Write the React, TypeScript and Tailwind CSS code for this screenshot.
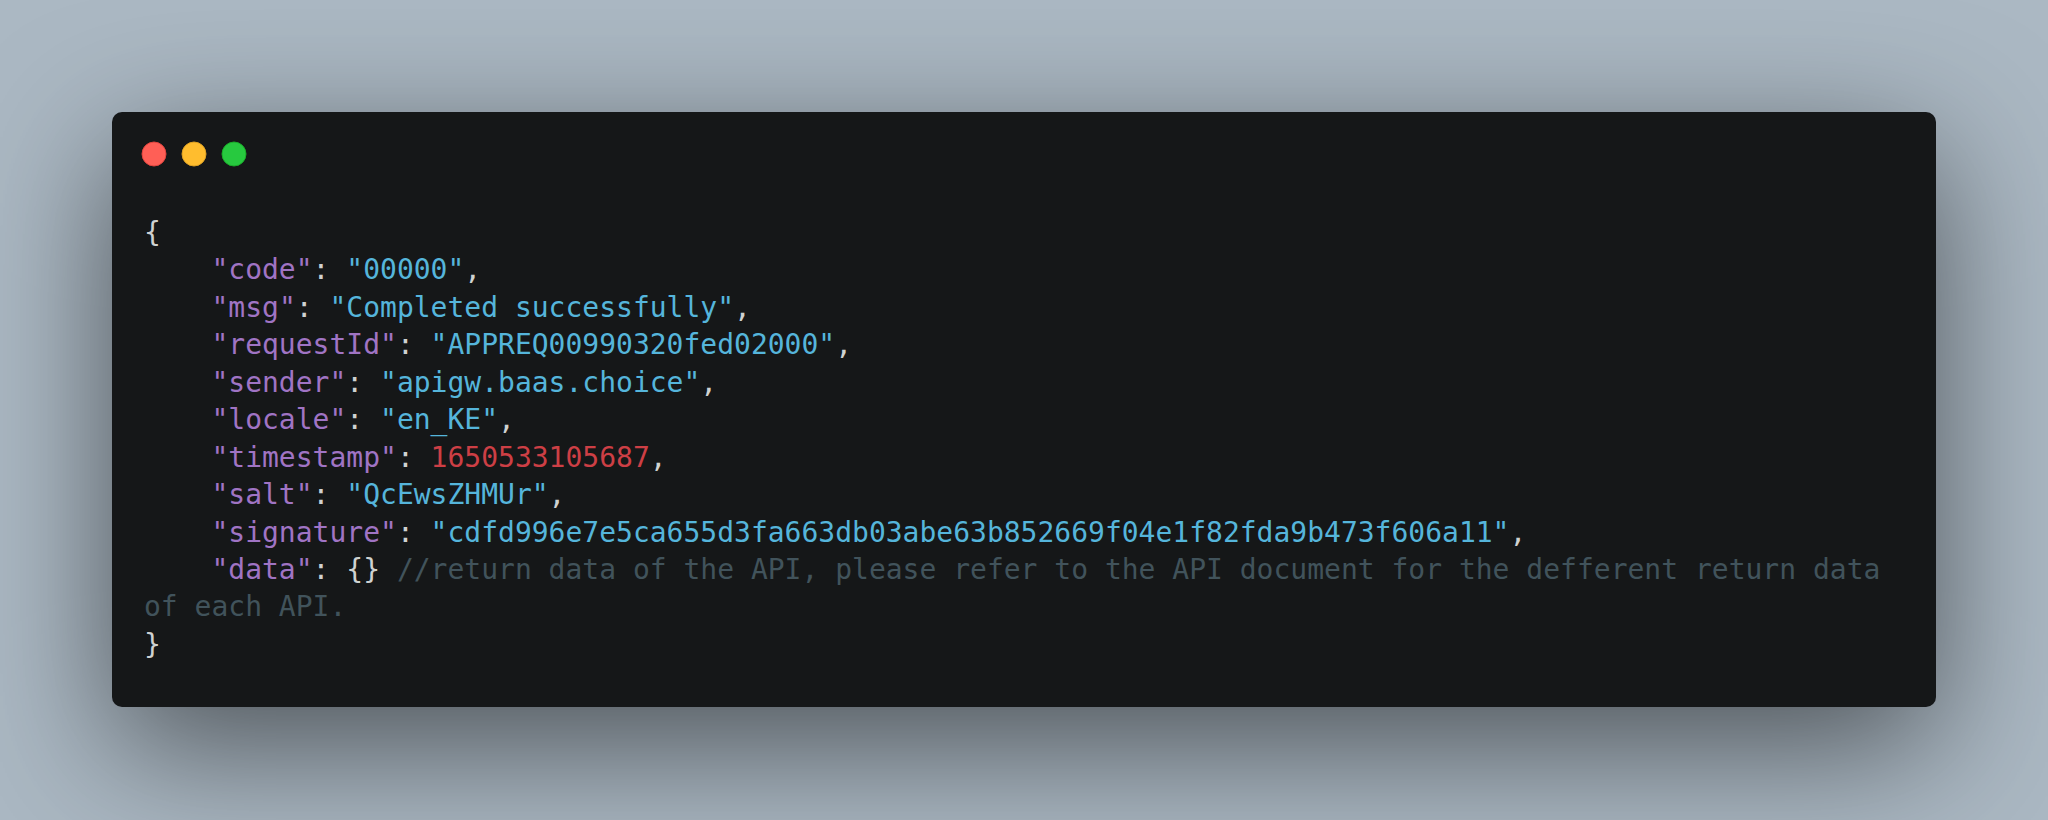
import React from "react";

const K = ({ children }: { children: React.ReactNode }) => (
  <span className="text-[#a074c4]">{children}</span>
);
const S = ({ children }: { children: React.ReactNode }) => (
  <span className="text-[#55b5db]">{children}</span>
);
const N = ({ children }: { children: React.ReactNode }) => (
  <span className="text-[#cd3f45]">{children}</span>
);
const C = ({ children }: { children: React.ReactNode }) => (
  <span className="text-[#41535b]">{children}</span>
);

const Line = ({ children }: { children?: React.ReactNode }) => (
  <div className="whitespace-pre h-[37.45px]">{children}</div>
);

const Pair = ({ k, v, last }: { k: string; v: React.ReactNode; last?: boolean }) => (
  <Line>
    {"    "}
    <K>"{k}"</K>
    {": "}
    {v}
    {last ? "" : ","}
  </Line>
);

export default function App() {
  return (
    <div className="min-h-[820px] w-full bg-[#abb8c3] p-[112px]">
      <div className="w-full rounded-[10px] bg-[#151718] shadow-[0_40px_136px_rgba(0,0,0,0.55)]">
        <div className="pl-[28px] pt-[28px]">
          <svg width="108" height="28" viewBox="0 0 54 14" className="block">
            <g fill="none" transform="translate(1 1)">
              <circle cx="6" cy="6" r="6" fill="#FF5F56" stroke="#E0443E" strokeWidth=".5" />
              <circle cx="26" cy="6" r="6" fill="#FFBD2E" stroke="#DEA123" strokeWidth=".5" />
              <circle cx="46" cy="6" r="6" fill="#27C93F" stroke="#1AAB29" strokeWidth=".5" />
            </g>
          </svg>
        </div>
        <div
          className="mt-[46px] px-[32px] pb-[44px] text-[28px] leading-[37.45px] text-[#cfd2d1]"
          style={{ fontFamily: '"DejaVu Sans Mono", "Liberation Mono", monospace' }}
        >
          <Line>{"{"}</Line>
          <Pair k="code" v={<S>"00000"</S>} />
          <Pair k="msg" v={<S>"Completed successfully"</S>} />
          <Pair k="requestId" v={<S>"APPREQ00990320fed02000"</S>} />
          <Pair k="sender" v={<S>"apigw.baas.choice"</S>} />
          <Pair k="locale" v={<S>"en_KE"</S>} />
          <Pair k="timestamp" v={<N>1650533105687</N>} />
          <Pair k="salt" v={<S>"QcEwsZHMUr"</S>} />
          <Pair
            k="signature"
            v={<S>"cdfd996e7e5ca655d3fa663db03abe63b852669f04e1f82fda9b473f606a11"</S>}
          />
          <Line>
            {"    "}
            <K>"data"</K>
            {": {} "}
            <C>//return data of the API, please refer to the API document for the defferent return data</C>
          </Line>
          <Line>
            <C>of each API.</C>
          </Line>
          <Line>{"}"}</Line>
        </div>
      </div>
    </div>
  );
}
